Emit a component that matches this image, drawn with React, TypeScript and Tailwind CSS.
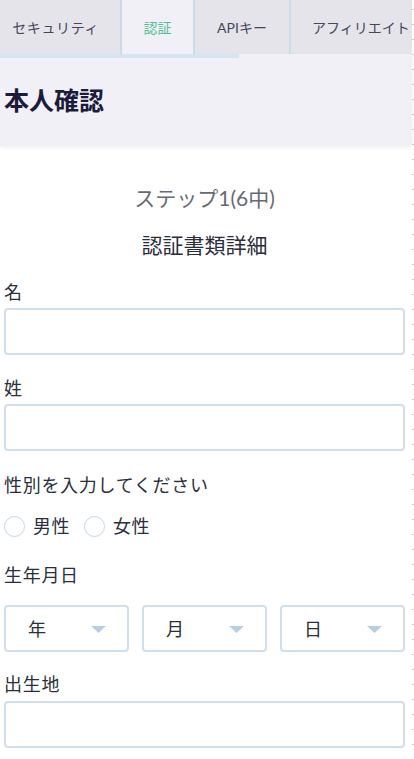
import React from "react";

const font = { fontFamily: '"Lato","Noto Sans CJK JP",sans-serif' };

function TextInput() {
  return <div className="h-[47px] w-full rounded-[4px] border-2 border-[#d0dfee] bg-white" />;
}

function Label({ children, className = "" }: { children: React.ReactNode; className?: string }) {
  return <div className={"text-[18px] leading-[24px] tracking-[0.7px] text-[#2b2e3c] " + className}>{children}</div>;
}

function Select({ label }: { label: string }) {
  return (
    <div className="flex h-[47px] items-center justify-between rounded-[4px] border-2 border-[#d0dfee] bg-white pl-[22px] pr-[21px]">
      <span className="text-[18px] leading-[24px] text-[#2b2e3c]">{label}</span>
      <svg width="15" height="7" viewBox="0 0 15 7" className="mt-[2px]">
        <polygon points="0,0 15,0 7.5,7" fill="#b9cde2" />
      </svg>
    </div>
  );
}

function Radio({ label }: { label: string }) {
  return (
    <div className="flex items-center gap-[8px]">
      <div className="h-[21px] w-[21px] rounded-full border-[1.5px] border-[#c3d5e8] bg-white" />
      <span className="text-[18px] leading-[24px] tracking-[0.5px] text-[#2b2e3c]">{label}</span>
    </div>
  );
}

export default function App() {
  return (
    <div className="flex h-[759px] w-[414px] overflow-hidden bg-white" style={font}>
      <div className="flex w-[412px] flex-col">
        {/* Tabs */}
        <div className="flex h-[54px] shrink-0 bg-[#e4e4ea] text-[14px] text-[#45475a]">
          <div className="flex w-[120px] shrink-0 items-center justify-end pr-[21px] tracking-[0.6px]">セキュリティ</div>
          <div className="w-[2px] shrink-0 bg-[#c9dcec]" />
          <div className="flex w-[71px] shrink-0 items-center justify-center bg-[#f0f0f6] text-[#58c092]">認証</div>
          <div className="w-[2px] shrink-0 bg-[#c9dcec]" />
          <div className="flex w-[94px] shrink-0 items-center justify-center">APIキー</div>
          <div className="w-[2px] shrink-0 bg-[#c9dcec]" />
          <div className="flex flex-1 items-center whitespace-nowrap pl-[21px]">アフィリエイト</div>
        </div>
        {/* Header */}
        <div className="relative z-10 h-[92px] shrink-0 bg-[#f0f0f6] shadow-[0_2px_4px_rgba(0,0,0,0.06)]">
          <div className="h-[4px] w-[239px] bg-[#d5e5f1]" />
          <h1 className="pl-[4px] pt-[26px] text-[25px] font-bold leading-[32px] text-[#1b1b3b]">本人確認</h1>
        </div>
        {/* Content */}
        <div className="flex flex-col pl-[4px] pr-[7px]">
          <div className="mt-[38px] text-center text-[21px] leading-[28px] text-[#676a74]">ステップ1(6中)</div>
          <div className="mt-[19px] text-center text-[21px] leading-[28px] text-[#2a2d3a]">認証書類詳細</div>
          <Label className="mt-[21px]">名</Label>
          <div className="mt-[4px]"><TextInput /></div>
          <Label className="mt-[21px]">姓</Label>
          <div className="mt-[4px]"><TextInput /></div>
          <Label className="mt-[22px]">性別を入力してください</Label>
          <div className="mt-[17px] flex items-center gap-[14px]">
            <Radio label="男性" />
            <Radio label="女性" />
          </div>
          <Label className="mt-[25px]">生年月日</Label>
          <div className="mt-[18px] grid grid-cols-3 gap-[13px]">
            <Select label="年" />
            <Select label="月" />
            <Select label="日" />
          </div>
          <Label className="mt-[20px]">出生地</Label>
          <div className="mt-[5px]"><TextInput /></div>
        </div>
      </div>
      <div className="w-[2px] shrink-0 bg-[repeating-linear-gradient(to_bottom,transparent_0px,transparent_9px,#c9c9d2_9px,#c9c9d2_10px,transparent_10px,transparent_15px)]" />
    </div>
  );
}
